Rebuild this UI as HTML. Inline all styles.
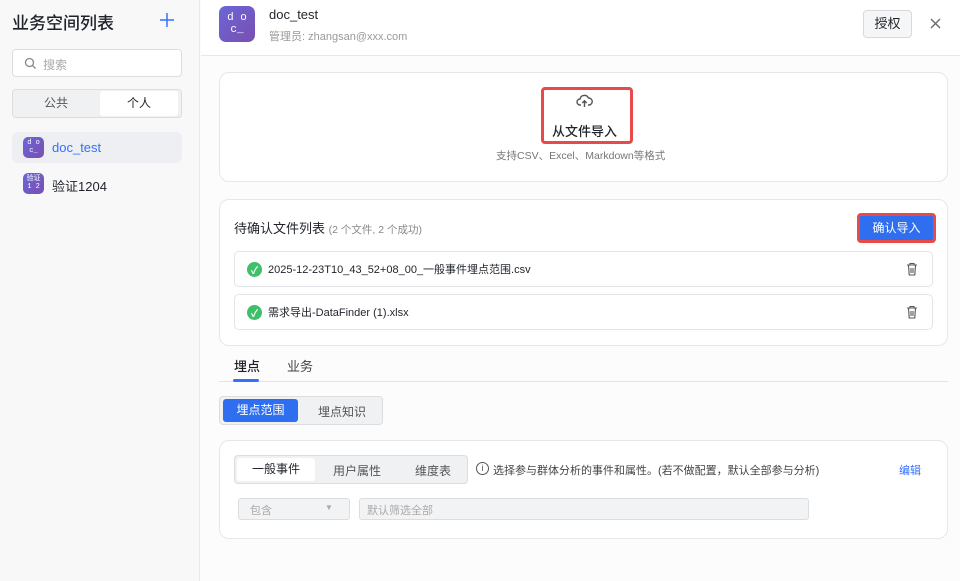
<!DOCTYPE html><html><head><meta charset="utf-8"><style>
*{box-sizing:border-box;margin:0;padding:0}
body{width:960px;height:581px;overflow:hidden;font-family:"Liberation Sans","Noto Sans CJK SC",sans-serif;background:#fcfcfc;position:relative;color:#1f2329}
.a{position:absolute}
.av{background:linear-gradient(135deg,#6a66d8,#7a4fb0);color:#fff;font-family:"Liberation Mono","Noto Sans CJK SC",monospace;text-align:center;display:flex;flex-direction:column;justify-content:center;line-height:1.1}
.card{position:absolute;border:1px solid #e6e7ea;border-radius:10px;background:#fff}
.file{position:absolute;left:234px;width:699px;height:36px;border:1px solid #e3e4e7;border-radius:5px;background:#fff;font-size:11px;display:flex;align-items:center;padding-left:12px}
.chk{width:15px;height:15px;border-radius:50%;background:#3fbf69;color:#fff;font-size:10px;display:flex;align-items:center;justify-content:center;margin-right:6px;font-weight:bold}
</style></head><body>
<div class="a" style="left:0;top:0;width:200px;height:581px;background:#f8f8f9;border-right:1px solid #e8e8ea"></div>
<div class="a" style="left:12px;top:9px;font-size:17px;font-weight:500">业务空间列表</div>
<svg class="a" style="left:160px;top:13px" width="14" height="14" viewBox="0 0 14 14"><path d="M7 0v14M0 7h14" stroke="#3370ff" stroke-width="1.5"/></svg>
<div class="a" style="left:12px;top:49px;width:170px;height:28px;border:1px solid #dcdde0;border-radius:4px;background:#fff;font-size:12px;color:#aaa;padding:6px 0 0 30px">搜索
<svg class="a" style="left:11px;top:7px" width="13" height="13" viewBox="0 0 13 13"><circle cx="5.5" cy="5.5" r="4" fill="none" stroke="#888" stroke-width="1.3"/><path d="M8.5 8.5l3 3" stroke="#888" stroke-width="1.3"/></svg></div>
<div class="a" style="left:12px;top:89px;width:170px;height:29px;border:1px solid #dcdde0;border-radius:4px;background:#f0f1f3"></div>
<div class="a" style="left:14px;top:91px;width:84px;height:25px;text-align:center;line-height:25px;font-size:12px;color:#555">公共</div>
<div class="a" style="left:100px;top:91px;width:78px;height:25px;background:#fff;border-radius:3px;text-align:center;line-height:25px;font-size:12px">个人</div>
<div class="a" style="left:12px;top:132px;width:170px;height:31px;background:#eeeff2;border-radius:6px"></div>
<div class="a av" style="left:23px;top:137px;width:21px;height:21px;border-radius:5px;font-size:7px">d o<br>c_</div>
<div class="a" style="left:52px;top:140px;font-size:13px;color:#3370ff">doc_test</div>
<div class="a av" style="left:23px;top:173px;width:21px;height:21px;border-radius:5px;font-size:7px">验证<br>1 2</div>
<div class="a" style="left:52px;top:176px;font-size:13px">验证1204</div>

<div class="a" style="left:201px;top:0;width:759px;height:56px;background:#fff;border-bottom:1px solid #e8e8ea"></div>
<div class="a av" style="left:219px;top:6px;width:36px;height:36px;border-radius:7px;font-size:11px">d o<br>c_</div>
<div class="a" style="left:269px;top:7px;font-size:13px;font-weight:500">doc_test</div>
<div class="a" style="left:269px;top:28px;font-size:11px;color:#999">管理员: zhangsan@xxx.com</div>
<div class="a" style="left:863px;top:10px;width:49px;height:28px;border:1px solid #d8d9dc;border-radius:4px;background:#f5f6f7;text-align:center;line-height:26px;font-size:13px">授权</div>
<svg class="a" style="left:930px;top:18px" width="11" height="11" viewBox="0 0 11 11"><path d="M1 1l9 9M10 1l-9 9" stroke="#666" stroke-width="1.3"/></svg>

<div class="card" style="left:219px;top:72px;width:729px;height:110px"></div>
<div class="a" style="left:541px;top:87px;width:92px;height:57px;border:3px solid #e84a4a;border-radius:4px"></div>
<svg class="a" style="left:576px;top:94px" width="17" height="14" viewBox="0 0 17 14"><path d="M5 11H4a3 3 0 010-6 4.5 4.5 0 018.5-1A3.2 3.2 0 0113 11h-1" fill="none" stroke="#555" stroke-width="1.4"/><path d="M8.5 13V7M6.3 9l2.2-2.2L10.7 9" fill="none" stroke="#555" stroke-width="1.4"/></svg>
<div class="a" style="left:552px;top:121px;font-size:13px;font-weight:500">从文件导入</div>
<div class="a" style="left:496px;top:148px;font-size:10.5px;color:#777">支持CSV、Excel、Markdown等格式</div>

<div class="card" style="left:219px;top:199px;width:729px;height:147px"></div>
<div class="a" style="left:234px;top:218px;font-size:13px">待确认文件列表 <span style="font-size:10.5px;color:#888">(2 个文件, 2 个成功)</span></div>
<div class="a" style="left:857px;top:213px;width:79px;height:30px;border:3px solid #e84a4a;border-radius:4px;background:#2f6fef;color:#fff;font-size:12px;text-align:center;line-height:24px">确认导入</div>
<div class="file" style="top:251px"><div class="chk">✓</div>2025-12-23T10_43_52+08_00_一般事件埋点范围.csv</div>
<div class="file" style="top:294px"><div class="chk">✓</div>需求导出-DataFinder (1).xlsx</div>
<svg class="a" style="left:906px;top:262px" width="12" height="14" viewBox="0 0 12 14"><path d="M1 3h10M4 3V1.5h4V3M2.5 3l.7 10h5.6l.7-10M5 6v5M7 6v5" fill="none" stroke="#555" stroke-width="1.1"/></svg>
<svg class="a" style="left:906px;top:305px" width="12" height="14" viewBox="0 0 12 14"><path d="M1 3h10M4 3V1.5h4V3M2.5 3l.7 10h5.6l.7-10M5 6v5M7 6v5" fill="none" stroke="#555" stroke-width="1.1"/></svg>

<div class="a" style="left:219px;top:381px;width:729px;height:1px;background:#e3e4e7"></div>
<div class="a" style="left:234px;top:356px;font-size:13px;font-weight:500">埋点</div>
<div class="a" style="left:233px;top:379px;width:26px;height:3px;background:#3370ff;border-radius:2px"></div>
<div class="a" style="left:287px;top:356px;font-size:13px;color:#444">业务</div>
<div class="a" style="left:219px;top:396px;width:164px;height:29px;border:1px solid #dcdde0;border-radius:4px;background:#f0f1f3"></div>
<div class="a" style="left:223px;top:399px;width:75px;height:23px;background:#2f6fef;border-radius:3px;color:#fff;font-size:12px;text-align:center;line-height:23px">埋点范围</div>
<div class="a" style="left:318px;top:403px;font-size:12px;color:#555">埋点知识</div>

<div class="card" style="left:219px;top:440px;width:729px;height:99px"></div>
<div class="a" style="left:234px;top:455px;width:234px;height:29px;border:1px solid #dcdde0;border-radius:4px;background:#f0f1f3"></div>
<div class="a" style="left:237px;top:458px;width:78px;height:23px;background:#fff;border-radius:3px;font-size:12px;text-align:center;line-height:23px">一般事件</div>
<div class="a" style="left:333px;top:462px;font-size:12px;color:#555">用户属性</div>
<div class="a" style="left:415px;top:462px;font-size:12px;color:#555">维度表</div>
<div class="a" style="left:476px;top:462px;width:13px;height:13px;border:1px solid #555;border-radius:50%;font-size:9px;text-align:center;line-height:11px;color:#555">i</div>
<div class="a" style="left:493px;top:462px;font-size:11px;color:#444">选择参与群体分析的事件和属性。(若不做配置，默认全部参与分析)</div>
<div class="a" style="left:899px;top:462px;font-size:11px;color:#3370ff">编辑</div>
<div class="a" style="left:238px;top:498px;width:112px;height:22px;border:1px solid #dcdde0;border-radius:3px;background:#f2f3f5;font-size:11px;color:#aaa;padding:3px 0 0 11px">包含<span style="position:absolute;left:86px;top:4px;font-size:8px">▼</span></div>
<div class="a" style="left:359px;top:498px;width:450px;height:22px;border:1px solid #dcdde0;border-radius:3px;background:#f2f3f5;font-size:11px;color:#aaa;padding:3px 0 0 7px">默认筛选全部</div>
</body></html>
